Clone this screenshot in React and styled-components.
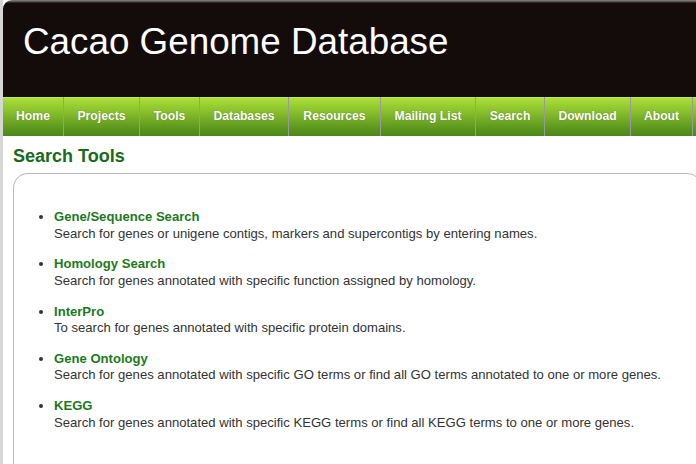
import React from "react";
import styled, { createGlobalStyle } from "styled-components";

const Global = createGlobalStyle`
  html, body { margin: 0; padding: 0; }
  body {
    background: #d6d6d6;
    font-family: "Liberation Sans", Arial, sans-serif;
    overflow: hidden;
  }
`;

const Page = styled.div`
  margin-left: 3px;
  width: 720px;
  min-height: 464px;
  background: #fff;
`;

const Header = styled.header`
  height: 97px;
  background: linear-gradient(#8a8686 0px, #4a4444 2px, #140b0b 3px);
  border-top-left-radius: 9px;
  display: flex;
  align-items: flex-start;
  box-sizing: border-box;
  padding: 20px 0 0 20px;
`;

const Title = styled.h1`
  margin: 0;
  color: #fff;
  font-weight: normal;
  font-size: 36.8px;
  line-height: 44px;
`;

const Nav = styled.nav`
  display: flex;
  height: 39px;
  background: linear-gradient(#c4ef4a 0px, #a8dc38 2px, #8ac12c 14px, #5f9a20 30px, #4c861a 39px);
`;

const NavItem = styled.a`
  display: flex;
  align-items: center;
  justify-content: center;
  box-sizing: border-box;
  width: ${(p) => p.$w}px;
  flex: none;
  padding-bottom: 1px;
  color: #fff;
  font-weight: bold;
  font-size: 12.2px;
  text-decoration: none;
  text-shadow: 0 0 1px rgba(0, 0, 0, 0.35);
  border-right: 1px solid #9a9a9a;
`;

const Main = styled.main`
  padding: 9px 0 0 10px;
`;

const Heading = styled.h2`
  margin: 0 0 6px 0;
  color: #186b18;
  font-size: 18px;
  line-height: 22px;
  font-weight: bold;
`;

const Box = styled.section`
  border: 1px solid #b9b9b9;
  border-right-color: #c8c8c8;
  border-radius: 15px;
  width: 689px;
  height: 320px;
  box-sizing: border-box;
  padding-top: 35px;
`;

const List = styled.ul`
  margin: 0;
  padding-left: 40px;
  list-style: disc;
  color: #333;
`;

const Item = styled.li`
  font-size: 13.1px;
  line-height: 16.5px;
  margin-bottom: 14.25px;
  white-space: nowrap;
  &::marker { color: #333; }
`;

const ItemTitle = styled.a`
  display: block;
  color: #1c7a1c;
  font-weight: bold;
  text-decoration: none;
`;

const ItemDesc = styled.div`
  color: #333;
`;

const navItems = [
  ["Home", 61],
  ["Projects", 76],
  ["Tools", 60],
  ["Databases", 89],
  ["Resources", 92],
  ["Mailing List", 95],
  ["Search", 69],
  ["Download", 86],
  ["About", 62],
  ["", 40],
];

const tools = [
  ["Gene/Sequence Search", "Search for genes or unigene contigs, markers and supercontigs by entering names."],
  ["Homology Search", "Search for genes annotated with specific function assigned by homology."],
  ["InterPro", "To search for genes annotated with specific protein domains."],
  ["Gene Ontology", "Search for genes annotated with specific GO terms or find all GO terms annotated to one or more genes."],
  ["KEGG", "Search for genes annotated with specific KEGG terms or find all KEGG terms to one or more genes."],
];

export default function App() {
  return (
    <>
      <Global />
      <Page>
        <Header>
          <Title>Cacao Genome Database</Title>
        </Header>
        <Nav>
          {navItems.map(([label, w], i) => (
            <NavItem key={i} $w={w} href="#">
              {label}
            </NavItem>
          ))}
        </Nav>
        <Main>
          <Heading>Search Tools</Heading>
          <Box>
            <List>
              {tools.map(([t, d]) => (
                <Item key={t}>
                  <ItemTitle href="#">{t}</ItemTitle>
                  <ItemDesc>{d}</ItemDesc>
                </Item>
              ))}
            </List>
          </Box>
        </Main>
      </Page>
    </>
  );
}
